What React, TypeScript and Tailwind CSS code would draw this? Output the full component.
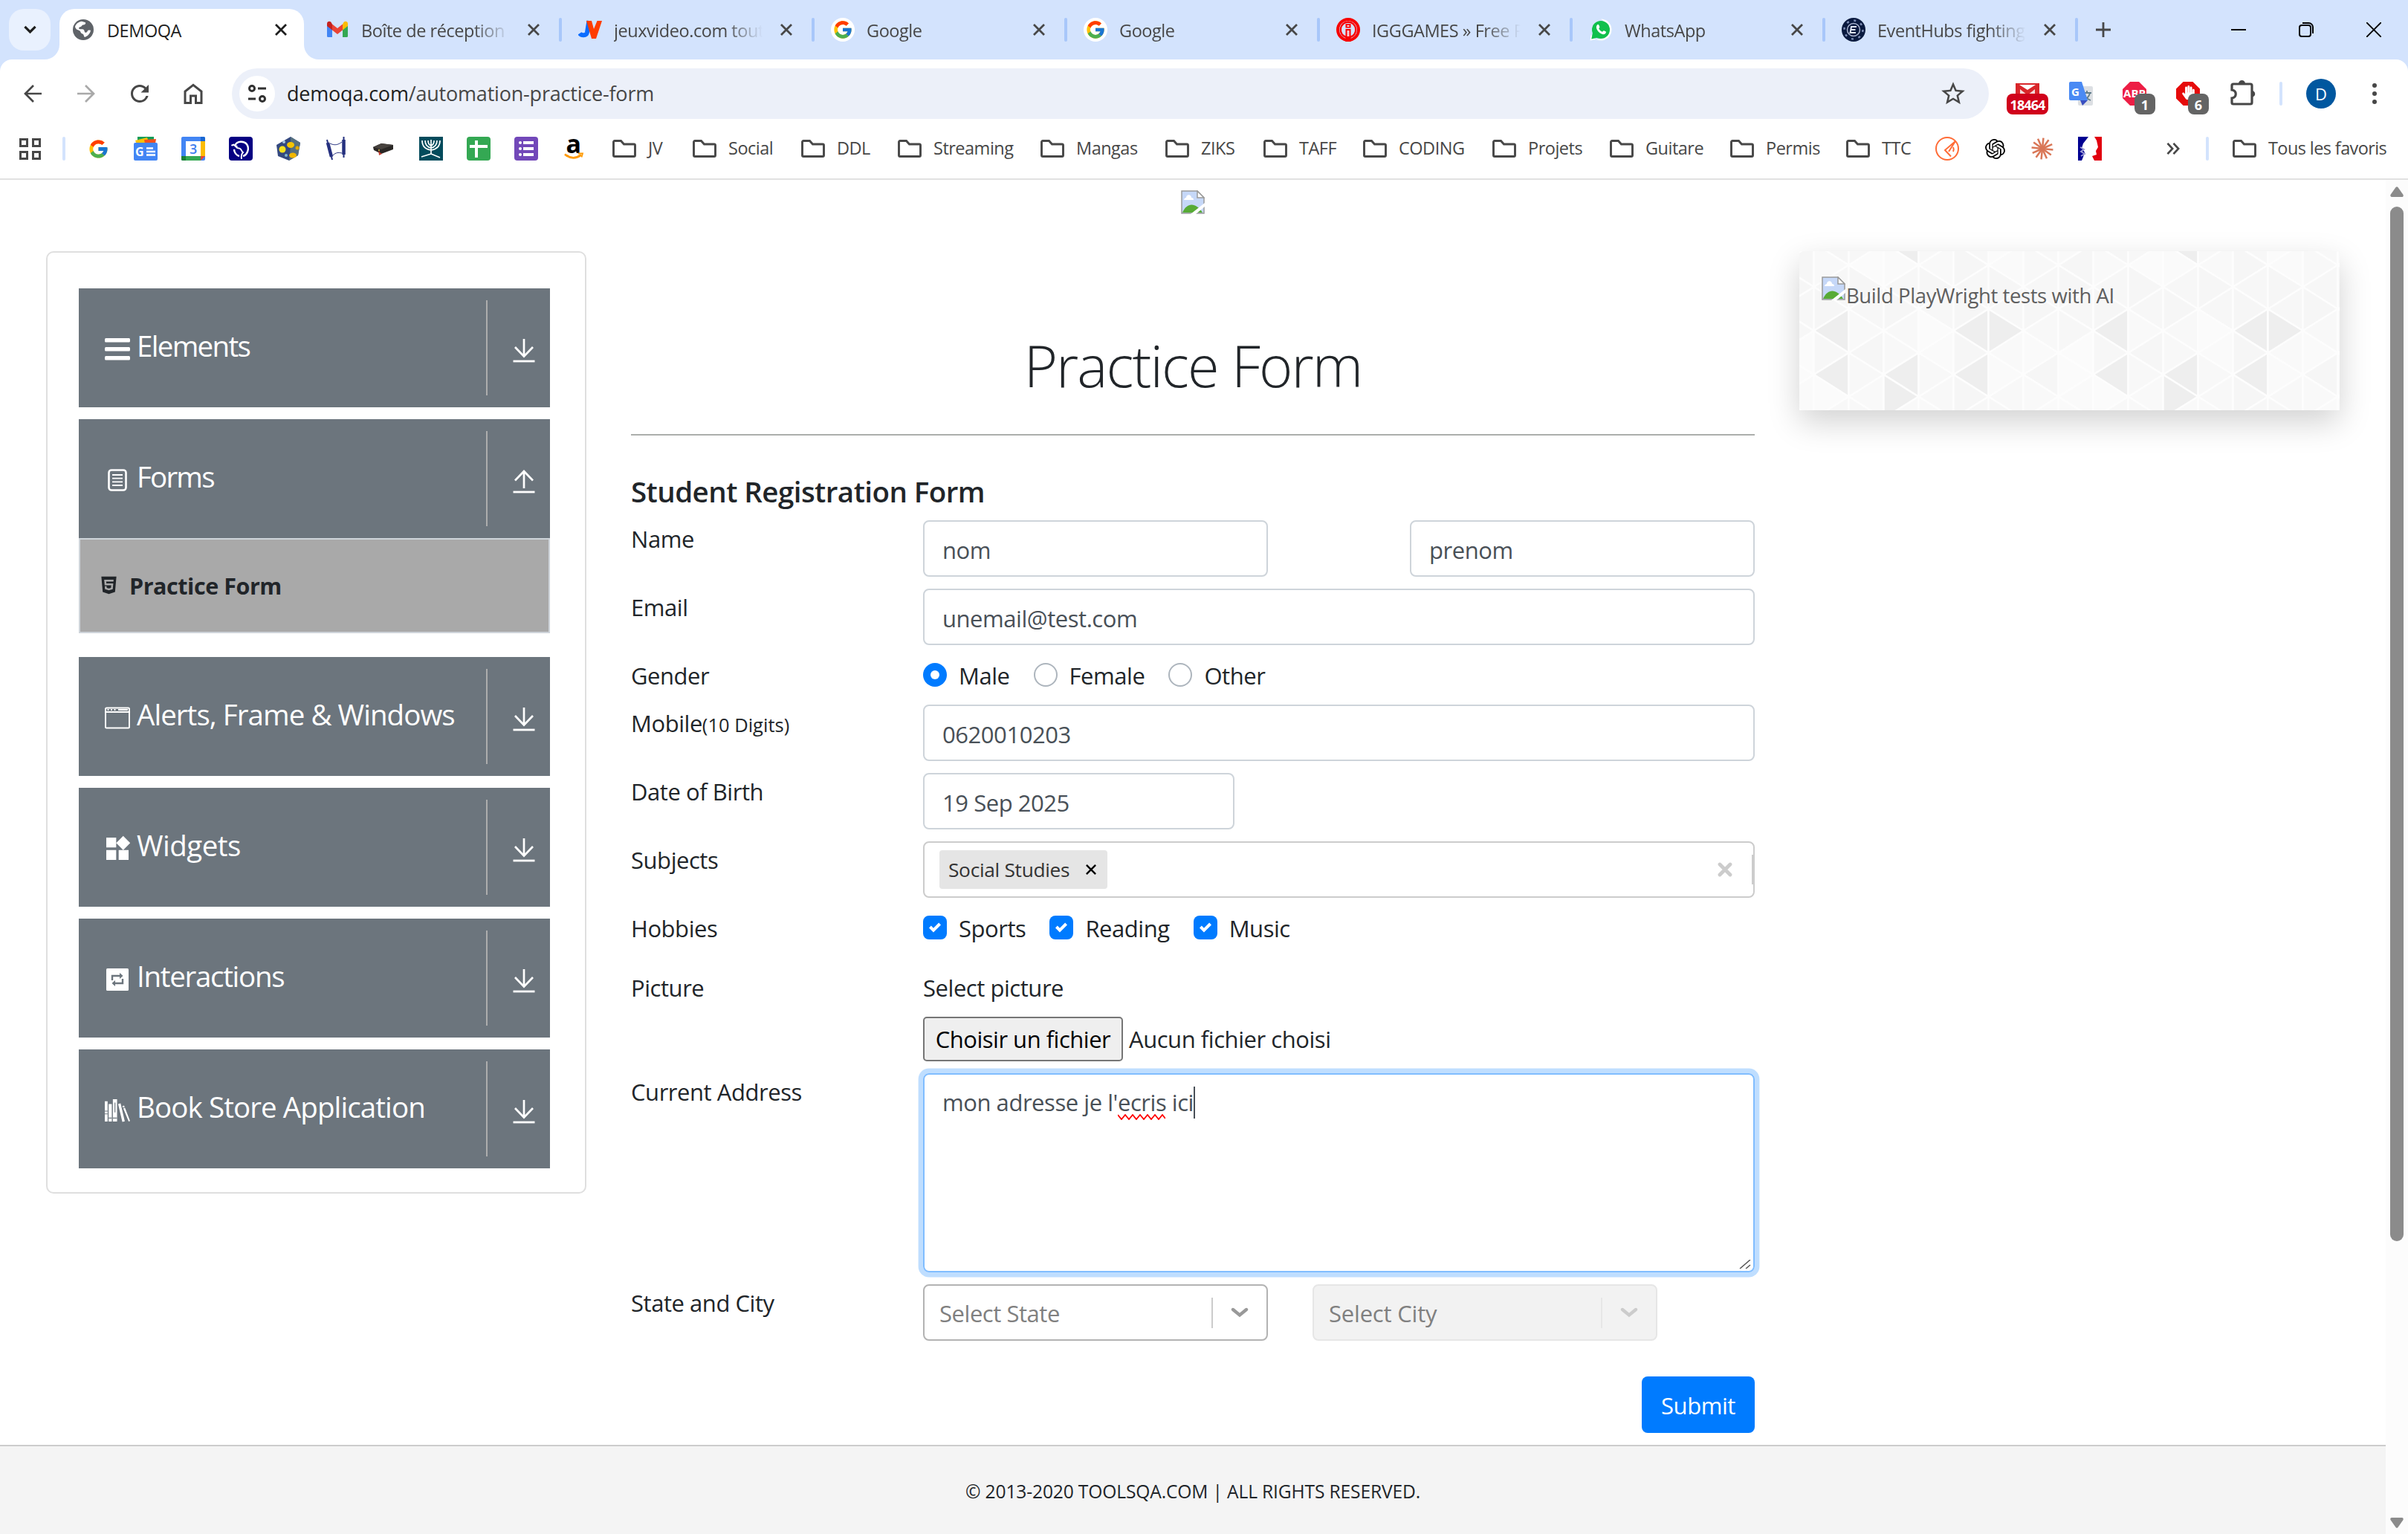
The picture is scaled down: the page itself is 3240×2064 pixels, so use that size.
import type { ReactNode } from "react";
import { FcGoogle } from "react-icons/fc";
import { FaHtml5, FaHandPaper } from "react-icons/fa";
import { SiOpenai } from "react-icons/si";
import { MdWidgets, MdRefresh, MdStarOutline } from "react-icons/md";

/* ---------- tab strip ---------- */

function CloseX({ className = "size-4" }: { className?: string }) {
  return (
    <svg viewBox="0 0 16 16" className={className} fill="none" stroke="currentColor" strokeWidth="2.8">
      <path d="M1 1l14 14M15 1L1 15" />
    </svg>
  );
}

function GlobeIcon() {
  return (
    <svg viewBox="0 0 28 28" className="size-7 shrink-0">
      <circle cx="14" cy="14" r="14" fill="#5f6368" />
      <path
        d="M3 10c1-4 5-7 9-7.3l5 1.6c.6 2-.6 3-3.4 3.2-1.6.2-1.8 2.600-3.600 2.800-1.200.1-2 .8-1.800 2 .2 1 1.600 1 4.300.9 2.500 0 3 1.500 3.200 3 .2 1.600 1.800 1.800 2.800 1.200 1.200-.6 1.200-2.400 2.800-2.800l2.700.2c-.6 4-3.500 7.600-8 9.200-1.300-1-1-2.500-1.700-3.600-.8-1.200-3-1-3.600-2.700-.5-1.600-1.400-2.600-3.400-3.200C6 14 4 13.500 3 10z"
        fill="#fff"
      />
      <path d="M20 6.500c2 1.400 3.800 3.500 4.400 6l-3.400.2c-1.200-1-1-2.600-2.200-3.400z" fill="#5f6368" />
    </svg>
  );
}

function GmailIcon() {
  return (
    <svg viewBox="0 0 32 24" className="h-6 w-8">
      <path d="M2 6v14.500A1.500 1.500 0 003.500 22H9V10z" fill="#4285f4" />
      <path d="M30 6v14.500a1.500 1.500 0 01-1.500 1.500H23V10z" fill="#34a853" />
      <path d="M23 4.500v8L30 7V4c0-3-3.200-4-5.200-2.500z" fill="#fbbc04" />
      <path d="M9 12.500v-8L16 10l7-5.500v8L16 18z" fill="#ea4335" />
      <path d="M2 4v3l7 5.500v-8L7.200 1.500C5 0 2 1 2 4z" fill="#c5221f" />
    </svg>
  );
}

function JvIcon() {
  return (
    <svg viewBox="0 0 32 32" className="size-8">
      <path d="M2 21c2 3 9 3.500 10-1.500L14.500 4" fill="none" stroke="#0a6cff" strokeWidth="6" />
      <path d="M11 4h7l3 11 4.500-11H32l-8 24h-6z" fill="#ff3d00" />
    </svg>
  );
}

function GoogleTabIcon() {
  return (
    <span className="flex size-8 items-center justify-center rounded-full bg-white">
      <FcGoogle className="size-7" />
    </span>
  );
}

function IggIcon() {
  return (
    <svg viewBox="0 0 32 32" className="size-8">
      <circle cx="16" cy="16" r="14" fill="#d3e3fd" stroke="#f80000" strokeWidth="4" />
      <path d="M16 5.500a10.500 10.500 0 00-3 20.500M16 5.500a10.500 10.500 0 013 20.500" fill="none" stroke="#f80000" strokeWidth="2.500" />
      <path d="M12.500 8h7v5.500h-7zM12.500 15h7v17h-7z" fill="#f80000" />
      <path d="M14.500 10h3v2h-3zM14.500 17h3v8h-3z" fill="#f7c9d4" />
    </svg>
  );
}

function WhatsappIcon() {
  return (
    <svg viewBox="0 0 32 32" className="size-8">
      <path d="M16 1.500A14.500 14.500 0 112.800 22L1.500 30.500 10 29A14.500 14.500 0 0016 1.500z" fill="#fff" />
      <circle cx="16" cy="16" r="12" fill="#10c04c" />
      <path d="M5 20l-1.700 8.500L12 26.500z" fill="#10c04c" />
      <path
        d="M11 9.500c1.500-1 2.300-.2 2.600.8l.8 2c.2 1-1.200 1.700-1 2.400 1 2 2.600 3.200 4.300 4 .8.200 1.500-1.800 2.400-1.500l2.700 1.400c.6.600-.2 2.600-1.400 3.200-2.500 1-5.600-.2-8-2.500-2.700-2.600-4.900-6.800-2.400-9.800z"
        fill="#fff"
      />
    </svg>
  );
}

function EventHubsIcon() {
  return (
    <svg viewBox="0 0 32 32" className="size-8">
      <circle cx="16" cy="16" r="16" fill="#0a1a3f" />
      <circle cx="16" cy="16" r="12.500" fill="none" stroke="#7d8db5" strokeWidth="2.500" strokeDasharray="3 6.800" />
      <circle cx="16" cy="16" r="8.500" fill="none" stroke="#aab4cf" strokeWidth="1.500" />
      <path d="M20 12h-7l-1.500 8h7.500M12.500 16h6" fill="none" stroke="#dfe5f2" strokeWidth="2" />
    </svg>
  );
}

function Tab({ icon, title }: { icon: ReactNode; title: string }) {
  return (
    <div className="flex h-20 w-[340px] shrink-0 items-center pl-[22px] text-[#474747]">
      <span className="flex w-8 justify-center">{icon}</span>
      <span className="ml-4 w-[200px] overflow-hidden whitespace-nowrap pt-1 [mask-image:linear-gradient(to_right,#000_75%,transparent)]">
        {title}
      </span>
      <CloseX className="ml-6 size-4" />
      <span className="ml-auto h-8 w-1 rounded-full bg-[#a8c7fa]" />
    </div>
  );
}

function TabStrip() {
  return (
    <div className="flex h-20 items-center bg-[#d3e3fd] text-[23.5px] tracking-[-0.45px]">
      <button className="ml-3 flex size-14 shrink-0 items-center justify-center rounded-[20px] bg-[#e9f1fe]">
        <svg viewBox="0 0 18 12" className="w-[17px]" fill="none" stroke="#1f1f1f" strokeWidth="3.400">
          <path d="M1.500 2L9 9.500 16.500 2" />
        </svg>
      </button>
      <div className="relative ml-3 flex h-[68px] w-[329px] shrink-0 self-end rounded-t-[20px] bg-white pl-[18px] text-[#1f1f1f]">
        <svg viewBox="0 0 20 20" className="absolute bottom-0 -left-5 size-5">
          <path d="M20 0v20H0A20 20 0 0020 0z" fill="#fff" />
        </svg>
        <svg viewBox="0 0 20 20" className="absolute bottom-0 -right-5 size-5">
          <path d="M0 0v20h20A20 20 0 010 0z" fill="#fff" />
        </svg>
        <div className="flex h-14 w-full items-center">
          <GlobeIcon />
          <span className="ml-[18px] pt-1">DEMOQA</span>
          <CloseX className="mr-[23px] ml-auto size-4" />
        </div>
      </div>
      <div className="ml-[7px] flex">
        <Tab icon={<GmailIcon />} title="Boîte de réception (" />
        <Tab icon={<JvIcon />} title="jeuxvideo.com tout" />
        <Tab icon={<GoogleTabIcon />} title="Google" />
        <Tab icon={<GoogleTabIcon />} title="Google" />
        <Tab icon={<IggIcon />} title="IGGGAMES » Free P" />
        <Tab icon={<WhatsappIcon />} title="WhatsApp" />
        <Tab icon={<EventHubsIcon />} title="EventHubs fighting" />
      </div>
      <svg viewBox="0 0 20 20" className="ml-6 size-5" stroke="#474747" strokeWidth="2.800">
        <path d="M10 0v20M0 10h20" />
      </svg>
      <div className="mr-9 ml-auto flex items-center gap-[71px] text-black">
        <span className="h-[2px] w-5 bg-black" />
        <svg viewBox="0 0 20 20" className="size-5" fill="none" stroke="currentColor" strokeWidth="2">
          <rect x="1" y="4" width="15" height="15" rx="3" />
          <path d="M5 1h8.500A5.500 5.500 0 0119 6.500V15" />
        </svg>
        <svg viewBox="0 0 20 20" className="size-5" stroke="currentColor" strokeWidth="1.900">
          <path d="M0 0l20 20M20 0L0 20" />
        </svg>
      </div>
    </div>
  );
}

/* ---------- toolbar ---------- */

function ArrowIcon({ className }: { className: string }) {
  return (
    <svg viewBox="0 0 24 24" className={className} fill="none" stroke="currentColor" strokeWidth="2.700">
      <path d="M24 12H2M13 1L2 12l11 11" />
    </svg>
  );
}

function ExtensionSlot({ children, badge }: { children: ReactNode; badge?: string }) {
  return (
    <span className="relative flex size-8 items-center justify-center">
      {children}
      {badge && (
        <span className="absolute top-4 left-4 flex h-7 w-7 items-center justify-center rounded-lg bg-[#646464] pt-[2px] text-[18px] font-bold text-white">
          {badge}
        </span>
      )}
    </span>
  );
}

function Toolbar() {
  return (
    <div className="bg-[#d3e3fd]">
      <div className="flex h-[90px] items-center rounded-t-2xl bg-white pt-[2px] text-[#474747]">
        <ArrowIcon className="ml-8 size-6" />
        <ArrowIcon className="ml-12 size-6 rotate-180 text-[#a9a9a9]" />
        <MdRefresh className="ml-[42px] size-[36px]" />
        <svg viewBox="0 0 26 28" className="ml-[41px] h-7 w-[26px]" fill="none" stroke="currentColor" strokeWidth="3">
          <path d="M2 11v15.500h7.500V17h7v9.500H24V11L13 2.300z" />
        </svg>
        <div className="ml-[39px] flex h-[68px] w-[2364px] items-center rounded-full bg-[#ecf0f9] pl-[10px]">
          <span className="flex size-12 items-center justify-center rounded-full bg-white">
            <svg viewBox="0 0 26 24" className="h-6 w-[26px]" fill="none" stroke="#303030" strokeWidth="3">
              <circle cx="6" cy="5" r="3.500" />
              <path d="M14 5h11M1 19h10" />
              <circle cx="20" cy="19" r="3.500" />
            </svg>
          </span>
          <span className="ml-4 pt-px text-[27px] tracking-[-0.2px]">
            <span className="text-[#1f1f1f]">demoqa.com</span>/automation-practice-form
          </span>
          <MdStarOutline className="mr-[29px] ml-auto size-[38px]" />
        </div>
        <span className="relative ml-6 flex h-[72px] w-14 justify-center">
          <svg viewBox="0 0 32 24" className="mt-[22px] h-6 w-8">
            <rect width="32" height="24" fill="#d9262a" />
            <path d="M5 2h22l-11 7z" fill="#fff" />
            <path d="M6 24V8l10 8 10-8v16h-4V15l-6 5-6-5v9z" fill="#f3d9d9" />
          </svg>
          <span className="absolute bottom-2 left-0 flex h-7 w-14 items-center justify-center rounded-lg bg-[#d0021b] pt-[2px] text-[18px] font-bold tracking-[-0.9px] text-white">
            18464
          </span>
        </span>
        <span className="ml-7 flex items-center gap-10">
          <ExtensionSlot>
            <svg viewBox="0 0 32 32" className="size-8">
              <rect x="12" y="6" width="20" height="26" rx="2" fill="#dcdfe3" />
              <path d="M18 15h12M24 12v3M28 15c-1 5-4 8-9 10M20 16c1 4 4 7 9 9" fill="none" stroke="#607d8b" strokeWidth="1.800" />
              <path d="M15 25h10l-7 7z" fill="#3a4fc0" />
              <path d="M2 0h15l8 25H2a2 2 0 01-2-2V2a2 2 0 012-2z" fill="#4a8af4" />
              <text x="3" y="19" fontSize="15" fontWeight="700" fill="#fff">G</text>
            </svg>
          </ExtensionSlot>
          <ExtensionSlot badge="1">
            <svg viewBox="0 0 32 32" className="size-8">
              <path d="M10 0h12l10 10v12L22 32H10L0 22V10z" fill="#ed1e45" />
              <text x="1" y="21" fontSize="15" fontWeight="700" fill="#fff" textLength="30">ABP</text>
            </svg>
          </ExtensionSlot>
          <ExtensionSlot badge="6">
            <span className="flex size-8 items-center justify-center bg-[#e60b0b] [clip-path:polygon(30%_0,70%_0,100%_30%,100%_70%,70%_100%,30%_100%,0_70%,0_30%)]">
              <FaHandPaper className="mb-1 size-[19px] text-white" />
            </span>
          </ExtensionSlot>
        </span>
        <svg viewBox="0 0 34 40" className="mb-1 ml-[41px] h-10 w-[34px]" fill="none" stroke="currentColor" strokeWidth="3.200">
          <path d="M4 9h23a2 2 0 012 2v23a2 2 0 01-2 2H4a2 2 0 01-2-2v-6c7-1 7-10 0-11v-6a2 2 0 012-2z" />
          <path d="M11 8.500a4.500 4.500 0 019 0zM29 18a4 4 0 010 8.500z" fill="currentColor" stroke="none" />
        </svg>
        <span className="ml-[32px] h-8 w-1 rounded-full bg-[#d3e3fd]" />
        <span className="ml-8 flex size-10 items-center justify-center rounded-full bg-[#00579f] pt-px text-[22px] text-white">D</span>
        <span className="ml-[49px] flex flex-col gap-[5px]">
          <span className="size-[6px] rounded-full bg-current" />
          <span className="size-[6px] rounded-full bg-current" />
          <span className="size-[6px] rounded-full bg-current" />
        </span>
      </div>
    </div>
  );
}

/* ---------- bookmarks ---------- */

function FolderIcon() {
  return (
    <svg viewBox="0 0 32 24" className="h-6 w-8 shrink-0" fill="none" stroke="currentColor" strokeWidth="2.900">
      <path d="M3 1.500h8.500l4 4.500H29a1.500 1.500 0 011.500 1.500v13.500a1.500 1.500 0 01-1.500 1.500H3A1.500 1.500 0 011.500 21V3A1.500 1.500 0 013 1.500z" />
    </svg>
  );
}

const folders = [
  { name: "JV", width: "w-[108px]" },
  { name: "Social", width: "w-[146px]" },
  { name: "DDL", width: "w-[130px]" },
  { name: "Streaming", width: "w-[192px]" },
  { name: "Mangas", width: "w-[168px]" },
  { name: "ZIKS", width: "w-[132px]" },
  { name: "TAFF", width: "w-[134px]" },
  { name: "CODING", width: "w-[174px]" },
  { name: "Projets", width: "w-[158px]" },
  { name: "Guitare", width: "w-[162px]" },
  { name: "Permis", width: "w-[156px]" },
  { name: "TTC", width: "w-[120px]" },
];

function SiteIcons() {
  return (
    <div className="ml-7 flex items-center gap-8">
      <span className="flex size-8 items-center justify-center">
        <FcGoogle className="size-[29px]" />
      </span>
      <svg viewBox="0 0 32 32" className="size-8">
        <path d="M5 0h22v10H5z" fill="#0f9d58" />
        <path d="M2 5l16-4 3 9H4z" fill="#ffc107" />
        <path d="M14 4l16-1-1 6H15z" fill="#f4511e" />
        <rect y="8" width="32" height="24" rx="2" fill="#4285f4" />
        <text x="2" y="26" fontSize="16" fontWeight="700" fill="#fff">G</text>
        <path d="M17 15.500h9M17 20h12M17 24.500h12" stroke="#fff" strokeWidth="2.500" />
      </svg>
      <svg viewBox="0 0 32 32" className="size-8">
        <rect width="32" height="32" rx="2" fill="#4285f4" />
        <path d="M26 0h4a2 2 0 012 2v4h-6z" fill="#1967d2" />
        <path d="M26 6h6v20h-6z" fill="#fbbc04" />
        <path d="M0 26h26v6H2a2 2 0 01-2-2z" fill="#34a853" />
        <path d="M0 26h6v6H2a2 2 0 01-2-2z" fill="#188038" />
        <path d="M26 26h6l-6 6z" fill="#ea4335" />
        <rect x="6" y="6" width="20" height="20" fill="#fff" />
        <text x="16" y="22.500" fontSize="18" fontWeight="600" fill="#3f7fee" textAnchor="middle">3</text>
      </svg>
      <svg viewBox="0 0 32 32" className="size-8" fill="none" stroke="#fff" strokeWidth="1.900">
        <rect width="32" height="32" rx="4" fill="#060082" stroke="none" />
        <path d="M8.500 11C11 6 20 5 24 10c4 6 1 14-5 16M7 17c0 4 3 8 7 9" strokeWidth="2.400" />
        <path d="M3.500 12c3-3 5 1 8 1M6 10l5 5 4 1c2 1 2 4 4 5-2 2-3 4-2 9" />
      </svg>
      <svg viewBox="0 0 32 32" className="size-8">
        <path d="M19 0l13 8-3 17-12 7-15-6L0 11z" fill="#34497f" />
        <path d="M19 0l13 8-3 17-12 7 2-20z" fill="#56707f" />
        <circle cx="8" cy="17" r="4.500" fill="#f6e21c" />
        <ellipse cx="19" cy="11" rx="5" ry="4" fill="#f5c400" />
        <ellipse cx="22" cy="25" rx="5" ry="3.500" fill="#f1b700" />
        <circle cx="28" cy="15" r="2.500" fill="#e0a800" />
        <circle cx="10" cy="7" r="2" fill="#a9c7e0" />
        <circle cx="13" cy="25" r="2" fill="#7fb5cf" />
      </svg>
      <svg viewBox="0 0 32 32" className="size-8" fill="none" stroke="#25307f">
        <path d="M5 8l5 19M26.500 4v20" strokeWidth="4.500" />
        <path d="M4 4l1 4M10 27l1 4M26.500 0v4M26.500 24v4" strokeWidth="2" />
        <path d="M8 9c6 3 11 2 16-2M12 25c4-4 7-4 12-3" strokeWidth="1" />
      </svg>
      <svg viewBox="0 0 32 32" className="size-8">
        <path d="M2 14l11-5 16 2v6L13 23 3 18z" fill="#2a2725" />
        <path d="M2 14l11-5 16 2-16 6z" fill="#47423e" />
        <path d="M9 16l2 5 3 2-4 2z" fill="#c33a2d" />
        <circle cx="10" cy="18" r="1" fill="#c6c14a" />
      </svg>
      <svg viewBox="0 0 32 32" className="size-8" fill="none" stroke="#fff" strokeWidth="1.700">
        <rect width="32" height="32" fill="#034b5c" stroke="none" />
        <path d="M4 5c0 8 5 12 12 13 7-1 12-5 12-13M8 5c0 6 3 9 8 10 5-1 8-4 8-10M12 5c0 4 1 6 4 7 3-1 4-3 4-7M16 4v20M16 23L3 27M16 23l12 5" />
      </svg>
      <svg viewBox="0 0 32 32" className="size-8" stroke="#fff" strokeWidth="4">
        <rect width="32" height="32" rx="4" fill="#34a853" stroke="none" />
        <path d="M13 5v23M4 13h24" />
      </svg>
      <svg viewBox="0 0 32 32" className="size-8" fill="#fff">
        <rect width="32" height="32" rx="4" fill="#7248b9" />
        <circle cx="8" cy="8" r="2" />
        <circle cx="8" cy="16" r="2" />
        <circle cx="8" cy="24" r="2" />
        <path d="M12 6h14v4H12zM12 14h14v4H12zM12 22h14v4H12z" />
      </svg>
      <svg viewBox="0 0 32 32" className="size-8">
        <text x="15.500" y="22" fontSize="34" fontWeight="700" textAnchor="middle" fill="#000">a</text>
        <path d="M4 23.500c7 6 15 6 22 1" fill="none" stroke="#ff9900" strokeWidth="2.800" />
        <path d="M22 22.500h6l-1.500 5" fill="none" stroke="#ff9900" strokeWidth="1.800" />
      </svg>
    </div>
  );
}

const rays = Array.from({ length: 12 }, (_, i) => (i * Math.PI) / 6 + 0.1);

function TrailingIcons() {
  return (
    <div className="flex items-center gap-8">
      <svg viewBox="0 0 32 32" className="size-8" fill="none" stroke="#ff6c37" strokeWidth="2">
        <circle cx="16" cy="16" r="15" />
        <path d="M27 6L13 18l8 8.500M27 6l-9 14M24 14c1 2 1 4 0 6" />
      </svg>
      <span className="flex size-8 items-center justify-center">
        <SiOpenai className="size-[27px] text-black" />
      </span>
      <svg viewBox="0 0 32 32" className="size-8" stroke="#d97757" strokeWidth="2.500">
        {rays.map((a) => (
          <path key={a} d={`M16 16L${16 + 14.5 * Math.cos(a)} ${16 + 14.5 * Math.sin(a)}`} />
        ))}
      </svg>
      <svg viewBox="0 0 32 32" className="size-8">
        <path d="M0 0h14l-3 4-4 5-2 6 4 6-2 6-2 5H0z" fill="#000091" />
        <path d="M22 0h10v32H22l-3-6 6-2-1-5 3-5-2-9z" fill="#e1000f" />
        <path d="M3 14l5 3-4 3 5 3-5 3" fill="none" stroke="#9d9dd4" strokeWidth="2" />
      </svg>
    </div>
  );
}

function BookmarksBar() {
  return (
    <div className="flex h-[72px] items-center border-b-2 border-[#e1e1e1] bg-white pb-[10px] text-[23.5px] tracking-[-0.5px] text-[#474747]">
      <span className="ml-[26px] grid grid-cols-2 gap-[5px]">
        <span className="size-[12px] border-[3px] border-current" />
        <span className="size-[12px] border-[3px] border-current" />
        <span className="size-[12px] border-[3px] border-current" />
        <span className="size-[12px] border-[3px] border-current" />
      </span>
      <span className="ml-[29px] h-8 w-1 rounded-full bg-[#d3e3fd]" />
      <SiteIcons />
      <div className="ml-9 flex">
        {folders.map((f) => (
          <span key={f.name} className={`flex shrink-0 items-center gap-4 ${f.width}`}>
            <FolderIcon />
            {f.name}
          </span>
        ))}
      </div>
      <TrailingIcons />
      <svg viewBox="0 0 20 18" className="ml-[86px] h-[16px] w-5" fill="none" stroke="currentColor" strokeWidth="3">
        <path d="M1.500 1L9 9l-7.500 8M10.500 1L18 9l-7.500 8" />
      </svg>
      <span className="ml-[34px] h-8 w-1 rounded-full bg-[#d3e3fd]" />
      <span className="ml-8 flex items-center gap-4 whitespace-nowrap tracking-[-0.6px]">
        <FolderIcon />
        Tous les favoris
      </span>
    </div>
  );
}

/* ---------- page ---------- */

function BrokenImage() {
  return (
    <svg viewBox="0 0 32 32" className="size-8 shrink-0">
      <path d="M1 1h21l9 9v21H1z" fill="#c6d8f8" stroke="#9a9a9a" strokeWidth="1.500" />
      <path d="M22 1v9h9z" fill="#fff" stroke="#9a9a9a" strokeWidth="1.500" />
      <path d="M4 13c0-2 2-3 3-3 0-5 7-5 7 0 2 0 3 1 3 3z" fill="#fff" />
      <path d="M2 30c6-14 18-14 27 0z" fill="#57ab36" />
      <path d="M13 32L32 17v5L20 32z" fill="#fff" />
    </svg>
  );
}

function MenuArrow({ up }: { up?: boolean }) {
  return (
    <svg viewBox="0 0 30 32" className="mt-2 h-8 w-[30px]" fill="none" stroke="#fff" strokeWidth="2.700">
      {up ? <path d="M15 25V2M3 14.500L15 2l12 12.500" /> : <path d="M15 0v23M3 11l12 12.500L27 11" />}
      <path d="M.5 30h29" strokeWidth="2.800" />
    </svg>
  );
}

const formsIcon = (
  <svg viewBox="0 0 34 34" className="size-[34px]" fill="none" stroke="#fff">
    <rect x="5.500" y="3.500" width="23" height="27" rx="3.500" strokeWidth="2.600" />
    <path d="M10 10h14M10 14.700h14M10 19.400h14M10 24h14" strokeWidth="1.800" />
  </svg>
);

const elementsIcon = (
  <svg viewBox="0 0 34 34" className="size-[34px]" fill="#fff">
    <rect y="2" width="34" height="5.500" rx="1.500" />
    <rect y="14" width="34" height="5.500" rx="1.500" />
    <rect y="26" width="34" height="5.500" rx="1.500" />
  </svg>
);

const windowIcon = (
  <svg viewBox="0 0 34 34" className="size-[34px]" fill="none" stroke="#fff" strokeWidth="2">
    <rect x="1" y="3.500" width="32" height="27" rx="1.500" />
    <path d="M1 9h32" />
    <path d="M3.500 6h2M8 6h2M12.500 6h2M18 6h13" />
  </svg>
);

const interactionsIcon = (
  <svg viewBox="0 0 34 34" className="size-[34px]">
    <rect x="2" y="2" width="30" height="30" rx="1.500" fill="#fff" />
    <path d="M10 18v-6h13M24 16v6H11" fill="none" stroke="#6c757d" strokeWidth="2.400" />
    <path d="M20 8l4.500 4-4.500 4zM14 18l-4.500 4 4.500 4z" fill="#6c757d" />
  </svg>
);

const booksIcon = (
  <svg viewBox="0 0 36 34" className="h-[34px] w-[36px]" fill="#fff">
    <path d="M0 4h4v29H0zM5.500 8h4.500v25H5.500zM11.500 1h6v32h-6zM19 8l3.500-1 6 25.500-3.500.8zM25 11l2.500-1L36 32l-2 .8z" />
    <path d="M0 18h4M0 22h4M5.500 28H10M14.500 6v14M11.500 28h6M25 14l3.500-1.200" stroke="#6c757d" strokeWidth="1.200" />
  </svg>
);

interface MenuItemProps {
  icon: ReactNode;
  label: string;
  up?: boolean;
  className?: string;
}

function MenuItem({ icon, label, up, className = "tracking-[-1px]" }: MenuItemProps) {
  return (
    <div className={`flex h-40 items-center bg-[#6c757d] text-white ${className}`}>
      <span className="ml-[35px] flex w-[34px] shrink-0 justify-center pt-1">{icon}</span>
      <span className="ml-[9px] flex-1 whitespace-nowrap pb-1 text-[38.5px]">{label}</span>
      <span className="h-32 w-[2px] bg-[#adadad]" />
      <span className="flex w-[84px] justify-center pl-[14px]">
        <MenuArrow up={up} />
      </span>
    </div>
  );
}

function Sidebar() {
  return (
    <nav className="ml-[62px] h-[1268px] w-[727px] shrink-0 rounded-[10px] border-2 border-[#dfdfdf] pt-12 pr-[47px] pl-[42px]">
      <MenuItem icon={elementsIcon} label="Elements" className="tracking-[-1.700px]" />
      <MenuItem icon={formsIcon} label="Forms" up className="mt-4 tracking-[-1.800px]" />
      <div className="flex h-32 items-center border-2 border-[#ced4da] bg-[#a9a9a9] pt-px pl-[26px] text-[30.5px] font-bold tracking-[-0.45px] text-[#212529]">
        <FaHtml5 className="mb-[2px] h-[27px] w-[25px]" />
        <span className="ml-[15px] pt-px">Practice Form</span>
      </div>
      <MenuItem icon={windowIcon} label="Alerts, Frame & Windows" className="mt-8 tracking-[-0.95px]" />
      <MenuItem icon={<MdWidgets className="size-[40px] shrink-0" />} label="Widgets" className="mt-4 tracking-[-0.5px]" />
      <MenuItem icon={interactionsIcon} label="Interactions" className="mt-4 tracking-[-1.300px]" />
      <MenuItem icon={booksIcon} label="Book Store Application" className="mt-4 tracking-[-0.9px]" />
    </nav>
  );
}

function Row({ label, className, children }: { label: ReactNode; className: string; children: ReactNode }) {
  return (
    <div className={`flex ${className}`}>
      <div className="w-[393px] shrink-0 pt-px leading-[48px]">{label}</div>
      {children}
    </div>
  );
}

function Field({ value, className }: { value: string; className: string }) {
  return (
    <div className={`flex h-[76px] items-center rounded-lg border-2 border-[#ced4da] pt-1 pl-6 text-[#495057] ${className}`}>
      {value}
    </div>
  );
}

function Radio({ label, checked }: { label: string; checked?: boolean }) {
  return (
    <span className="flex h-12 items-center">
      {checked ? (
        <span className="flex size-8 items-center justify-center rounded-full bg-[#007bff]">
          <span className="size-3 rounded-full bg-white" />
        </span>
      ) : (
        <span className="size-8 rounded-full border-2 border-[#adb5bd]" />
      )}
      <span className="ml-4 pt-[2px]">{label}</span>
    </span>
  );
}

function Checkbox({ label }: { label: string }) {
  return (
    <span className="flex h-12 items-center">
      <span className="flex size-8 items-center justify-center rounded-lg bg-[#007bff]">
        <svg viewBox="0 0 8 8" className="size-4" fill="#fff">
          <path d="M6.564.75l-3.590 3.612-1.538-1.550L0 4.260 2.974 7.250 8 2.193z" />
        </svg>
      </span>
      <span className="ml-4 pt-[2px]">{label}</span>
    </span>
  );
}

function Chevron() {
  return (
    <svg viewBox="0 0 24 14" className="h-[14px] w-6" fill="none" stroke="currentColor" strokeWidth="4.400" strokeLinecap="round">
      <path d="M3 3l9 7.500L21 3" />
    </svg>
  );
}

function FormPanel() {
  return (
    <main className="ml-[60px] w-[1512px] shrink-0 text-[31px] tracking-[-0.45px] whitespace-nowrap text-[#212529]">
      <h1 className="mt-[101px] h-[104px] text-center text-[77.5px] leading-[104px] font-light tracking-[-1.900px]">Practice Form</h1>
      <div className="mt-[41px] h-[2px] bg-[#acafac]" />
      <h5 className="mt-[51px] h-12 text-[38.5px] leading-12 font-semibold tracking-[-0.55px]">Student Registration Form</h5>

      <Row label="Name" className="mt-[15px] h-[76px]">
        <Field value="nom" className="w-[464px]" />
        <Field value="prenom" className="ml-[191px] w-[464px]" />
      </Row>
      <Row label="Email" className="mt-4 h-[76px]">
        <Field value="unemail@test.com" className="flex-1" />
      </Row>
      <Row label="Gender" className="mt-4 h-12">
        <div className="flex gap-[32px]">
          <Radio label="Male" checked />
          <Radio label="Female" />
          <Radio label="Other" />
        </div>
      </Row>
      <Row
        label={
          <>
            Mobile<span className="text-[25.500px] tracking-normal">(10 Digits)</span>
          </>
        }
        className="mt-4 h-[76px]"
      >
        <Field value="0620010203" className="flex-1" />
      </Row>
      <Row label="Date of Birth" className="mt-4 h-[76px]">
        <Field value="19 Sep 2025" className="w-[419px]" />
      </Row>
      <Row label="Subjects" className="mt-4 h-[76px]">
        <div className="flex flex-1 items-center rounded-lg border-2 border-[#ccc] pl-5">
          <span className="flex h-[52px] items-center rounded bg-[#e5e5e5] pr-[15px] pl-3 text-[26.3px] tracking-[-0.3px] text-[#333]">
            <span className="w-[185px] pt-[2px]">Social Studies</span>
            <CloseX className="size-[14px] text-black" />
          </span>
          <svg viewBox="0 0 20 20" className="mr-[26px] ml-auto size-5 text-[#ccc]" stroke="currentColor" strokeWidth="4.800" strokeLinecap="round">
            <path d="M3 3l14 14M17 3L3 17" />
          </svg>
          <span className="h-10 w-[2px] bg-[#ccc]" />
        </div>
      </Row>
      <Row label="Hobbies" className="mt-4 h-12">
        <div className="flex gap-[32px]">
          <Checkbox label="Sports" />
          <Checkbox label="Reading" />
          <Checkbox label="Music" />
        </div>
      </Row>
      <Row label="Picture" className="mt-8 h-[124px]">
        <div>
          <div className="pt-px leading-[48px]">Select picture</div>
          <div className="mt-[15px] flex h-[60px] items-center">
            <span className="flex h-[60px] w-[269px] items-center justify-center rounded-[5px] border-2 border-[#767676] bg-[#efefef] pt-px tracking-[-0.5px] text-black">
              Choisir un fichier
            </span>
            <span className="ml-2 pt-px">Aucun fichier choisi</span>
          </div>
        </div>
      </Row>
      <Row label="Current Address" className="mt-4 h-[268px]">
        <div className="relative flex-1 rounded-lg border-2 border-[#80bdff] pt-[13px] pl-6 text-[#495057] shadow-[0_0_0_6.400px_#bfdeff]">
          <div className="flex h-12 items-center leading-12">
            <span>mon adresse je l'</span>
            <span className="relative">
              ecris
              <svg viewBox="0 0 64 8" className="absolute bottom-0 left-0 h-2 w-16" fill="none" stroke="#f00" strokeWidth="1.800">
                <path d="M0 1l5 6 5-6 5 6 5-6 5 6 5-6 5 6 5-6 5 6 5-6 5 6 5-6 4 5" />
              </svg>
            </span>
            <span className="whitespace-pre"> ici</span>
            <span className="h-[43px] w-[2px] bg-[#495057]" />
          </div>
          <svg viewBox="0 0 16 12" className="absolute right-[3px] bottom-[3px] h-3 w-4" stroke="#555" strokeWidth="1.500">
            <path d="M1 12L15 0M9 12l6-5" />
          </svg>
        </div>
      </Row>
      <Row label="State and City" className="mt-4 h-[76px]">
        <div className="flex w-[464px] items-center rounded-lg border-2 border-[#b3b3b3] pl-5 text-[#808080]">
          <span className="w-[366px] pt-[2px]">Select State</span>
          <span className="h-[41px] w-[2px] bg-[#ccc]" />
          <span className="ml-6 text-[#999]">
            <Chevron />
          </span>
        </div>
        <div className="ml-[60px] flex w-[464px] items-center rounded-lg border-2 border-[#e6e6e6] bg-[#f2f2f2] pl-5 text-[#808080]">
          <span className="w-[366px] pt-[2px] tracking-[-0.2px]">Select City</span>
          <span className="h-[41px] w-[2px] bg-[#e6e6e6]" />
          <span className="ml-6 text-[#ccc]">
            <Chevron />
          </span>
        </div>
      </Row>
      <div className="mt-12 ml-auto flex h-[76px] w-[152px] items-center justify-center rounded-lg bg-[#007bff] pt-[3px] text-white">
        Submit
      </div>
    </main>
  );
}

/* Triangular tile backdrop: columns 47px apart, vertices 59px apart, alternate columns offset by half. */
const COL = 47;
const ROW = 59;
const dark = new Set(["0L1", "0L2", "2L2", "2R2", "2L-1", "4L1", "4L2", "5R2"]);
const shades = ["#f9f9f9", "#f8f8f8", "#fbfbfb", "#f6f6f6", "#f8f8f8", "#fafafa", "#f7f7f7"];

const triangles = Array.from({ length: 17 }, (_, i) => {
  const x0 = 19.5 + (i - 1) * COL;
  const x1 = x0 + COL;
  const strip = (i + 7) % 8;
  const even = strip % 2 === 0;
  const leftBase = even ? -11 : 18.7;
  const rightBase = even ? 18.7 : -11;
  return Array.from({ length: 7 }, (_, j) => {
    const n = j - 1;
    const yl = leftBase + n * ROW;
    const yr = rightBase + n * ROW;
    const row = even ? n - 1 : n;
    const shade = (k: number) => shades[(strip * 5 + j * 3 + k * 4 + strip * j) % shades.length];
    return [
      {
        key: `${i}L${j}`,
        d: even ? `M${x0} ${yl}L${x1} ${yr - ROW}V${yr}z` : `M${x0} ${yl}L${x1} ${yr}V${yr + ROW}z`,
        fill: dark.has(`${strip}L${row}`) ? "#eeeeee" : shade(0),
      },
      {
        key: `${i}R${j}`,
        d: even ? `M${x1} ${yr}L${x0} ${yl}V${yl + ROW}z` : `M${x1} ${yr}L${x0} ${yl - ROW}V${yl}z`,
        fill: dark.has(`${strip}R${even ? n - 1 : n}`) ? "#eeeeee" : shade(1),
      },
    ];
  }).flat();
}).flat();

function PromoCard() {
  return (
    <aside className="relative ml-[60px] h-[214px] w-[727px] shrink-0 bg-[#f8f8f8] shadow-[0_16px_40px_rgba(0,0,0,0.18)]">
      <svg viewBox="0 0 727 214" className="absolute inset-0 h-full w-full overflow-hidden" stroke="#fdfdfd" strokeWidth="2.500">
        {triangles.map((t) => (
          <path key={t.key} d={t.d} fill={t.fill} />
        ))}
      </svg>
      <div className="relative flex pt-[34px] pl-[30px]">
        <BrokenImage />
        <span className="mt-[6px] ml-[1px] text-[27.5px] leading-10 tracking-[-0.4px] whitespace-nowrap text-[#5f5f5f]">
          Build PlayWright tests with AI
        </span>
      </div>
    </aside>
  );
}

function Scrollbar() {
  return (
    <div className="flex w-[30px] shrink-0 flex-col items-center bg-[#fcfcfc]">
      <svg viewBox="0 0 18 14" className="mt-[9px] h-[14px] w-[18px]">
        <path d="M7.500 1a2 2 0 013 0l7 10c.6 1.500 0 3-1.500 3H2C.5 14 0 12.500.5 11z" fill="#8b8b8b" />
      </svg>
      <span className="mt-[13px] h-[1392px] w-[18px] rounded-full bg-[#8b8b8b]" />
      <svg viewBox="0 0 18 14" className="mt-auto mb-2 h-[14px] w-[18px] rotate-180">
        <path d="M7.500 1a2 2 0 013 0l7 10c.6 1.500 0 3-1.500 3H2C.5 14 0 12.500.5 11z" fill="#8b8b8b" />
      </svg>
    </div>
  );
}

export default function App() {
  return (
    <div className="flex h-[2064px] w-[3240px] flex-col overflow-hidden bg-white font-['Open_Sans','Noto_Sans',sans-serif]">
      <TabStrip />
      <Toolbar />
      <BookmarksBar />
      <div className="flex min-h-0 flex-1">
        <div className="flex flex-1 flex-col">
          <header className="flex h-24 justify-center pt-[14px]">
            <BrokenImage />
          </header>
          <div className="flex min-h-0 flex-1 items-start">
            <Sidebar />
            <FormPanel />
            <PromoCard />
          </div>
          <footer className="flex h-[120px] shrink-0 items-center justify-center border-t-2 border-[#ccc] bg-[#f4f4f4] pt-[5px] text-[24.6px] tracking-[-0.15px] text-[#212529]">
            © 2013-2020 TOOLSQA.COM | ALL RIGHTS RESERVED.
          </footer>
        </div>
        <Scrollbar />
      </div>
    </div>
  );
}
